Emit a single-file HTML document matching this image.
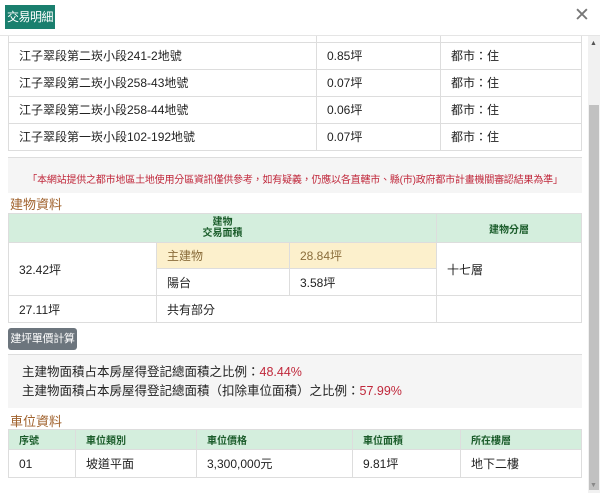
<!DOCTYPE html>
<html><head><meta charset="utf-8"><style>
*{box-sizing:border-box;margin:0;padding:0}
body{width:600px;height:493px;overflow:hidden;background:#fff;font-family:"Liberation Sans","Noto Sans CJK TC",sans-serif;font-size:12px;color:#222;position:relative}
.abs{position:absolute;white-space:nowrap}
.badge{left:5px;top:5px;width:50px;height:24px;background:#1a7f6e;color:#fff;font-size:12px;line-height:24px;text-align:center;letter-spacing:-0.5px}
.x{left:574px;top:4px;font-size:19px;color:#777}
.hdr{left:0;top:35px;width:600px;border-top:1px solid #e5e5e5}
.sb{left:588px;top:36px;width:12px;height:457px;background:#f1f1f1}
.thumb{left:589px;top:105px;width:10px;height:385px;background:#c1c1c1}
table{border-collapse:collapse;position:absolute;table-layout:fixed}
td,th{border:1px solid #ddd;padding:0 10px;text-align:left;font-weight:normal;white-space:nowrap}
.g th{background:#d4eedd;color:#1a5c2a;font-size:10px;font-weight:bold}
.box{background:#f5f5f5}
.brown{color:#a0622d;font-size:13px}
.red{color:#c0283b}
</style></head><body>
<div class="abs badge">交易明細</div>
<div class="abs x">✕</div>
<div class="abs hdr"></div>
<table style="left:8px;top:36px;width:574px">
<colgroup><col style="width:308px"><col style="width:124px"><col></colgroup>
<tr style="height:6px"><td style="border-top:none"></td><td style="border-top:none"></td><td style="border-top:none"></td></tr>
<tr style="height:27px"><td>江子翠段第二崁小段241-2地號</td><td>0.85坪</td><td>都市：住</td></tr>
<tr style="height:27px"><td>江子翠段第二崁小段258-43地號</td><td>0.07坪</td><td>都市：住</td></tr>
<tr style="height:27px"><td>江子翠段第二崁小段258-44地號</td><td>0.06坪</td><td>都市：住</td></tr>
<tr style="height:27px"><td>江子翠段第一崁小段102-192地號</td><td>0.07坪</td><td>都市：住</td></tr>
</table>
<div class="abs box" style="left:8px;top:157px;width:574px;height:36px;border-top:1px solid #ddd"></div>
<div class="abs red" style="left:8px;top:171px;width:574px;text-align:center;font-size:10px;letter-spacing:-0.2px">「本網站提供之都市地區土地使用分區資訊僅供參考，如有疑義，仍應以各直轄市、縣(市)政府都市計畫機關審認結果為準」</div>
<div class="abs brown" style="left:10px;top:194px">建物資料</div>
<table class="g" style="left:8px;top:213px;width:574px">
<colgroup><col style="width:148px"><col style="width:133px"><col style="width:147px"><col></colgroup>
<tr style="height:29px"><th colspan="3" style="text-align:center;line-height:11px">建物<br>交易面積</th><th style="text-align:center">建物分層</th></tr>
<tr style="height:26px"><td rowspan="2">32.42坪</td><td style="background:#fcf0cc;color:#8a6d3b">主建物</td><td style="background:#fcf0cc;color:#8a6d3b">28.84坪</td><td rowspan="2">十七層</td></tr>
<tr style="height:27px"><td>陽台</td><td>3.58坪</td></tr>
<tr style="height:27px"><td>27.11坪</td><td colspan="2">共有部分</td><td></td></tr>
</table>
<div class="abs" style="left:8px;top:328px;width:69px;height:22px;background:#6c757d;color:#fff;border-radius:3px;line-height:22px;text-align:center;font-size:11px;letter-spacing:-0.3px">建坪單價計算</div>
<div class="abs box" style="left:8px;top:354px;width:574px;height:54px;border-top:1px solid #ddd"></div>
<div class="abs" style="left:22px;top:363px;font-size:12.5px;line-height:19px">主建物面積占本房屋得登記總面積之比例：<span class="red">48.44%</span><br>主建物面積占本房屋得登記總面積（扣除車位面積）之比例：<span class="red">57.99%</span></div>
<div class="abs brown" style="left:10px;top:411px">車位資料</div>
<table class="g" style="left:8px;top:429px;width:574px">
<colgroup><col style="width:67px"><col style="width:121px"><col style="width:156px"><col style="width:108px"><col></colgroup>
<tr style="height:20px"><th>序號</th><th>車位類別</th><th>車位價格</th><th>車位面積</th><th>所在樓層</th></tr>
<tr style="height:28px"><td>01</td><td>坡道平面</td><td>3,300,000元</td><td>9.81坪</td><td>地下二樓</td></tr>
</table>
<div class="abs sb"></div>
<div class="abs thumb"></div>
<div class="abs" style="left:590px;top:40px;font-size:7px;color:#555">▲</div>
<div class="abs" style="left:590px;top:482px;font-size:7px;color:#888">▼</div>
</body></html>
